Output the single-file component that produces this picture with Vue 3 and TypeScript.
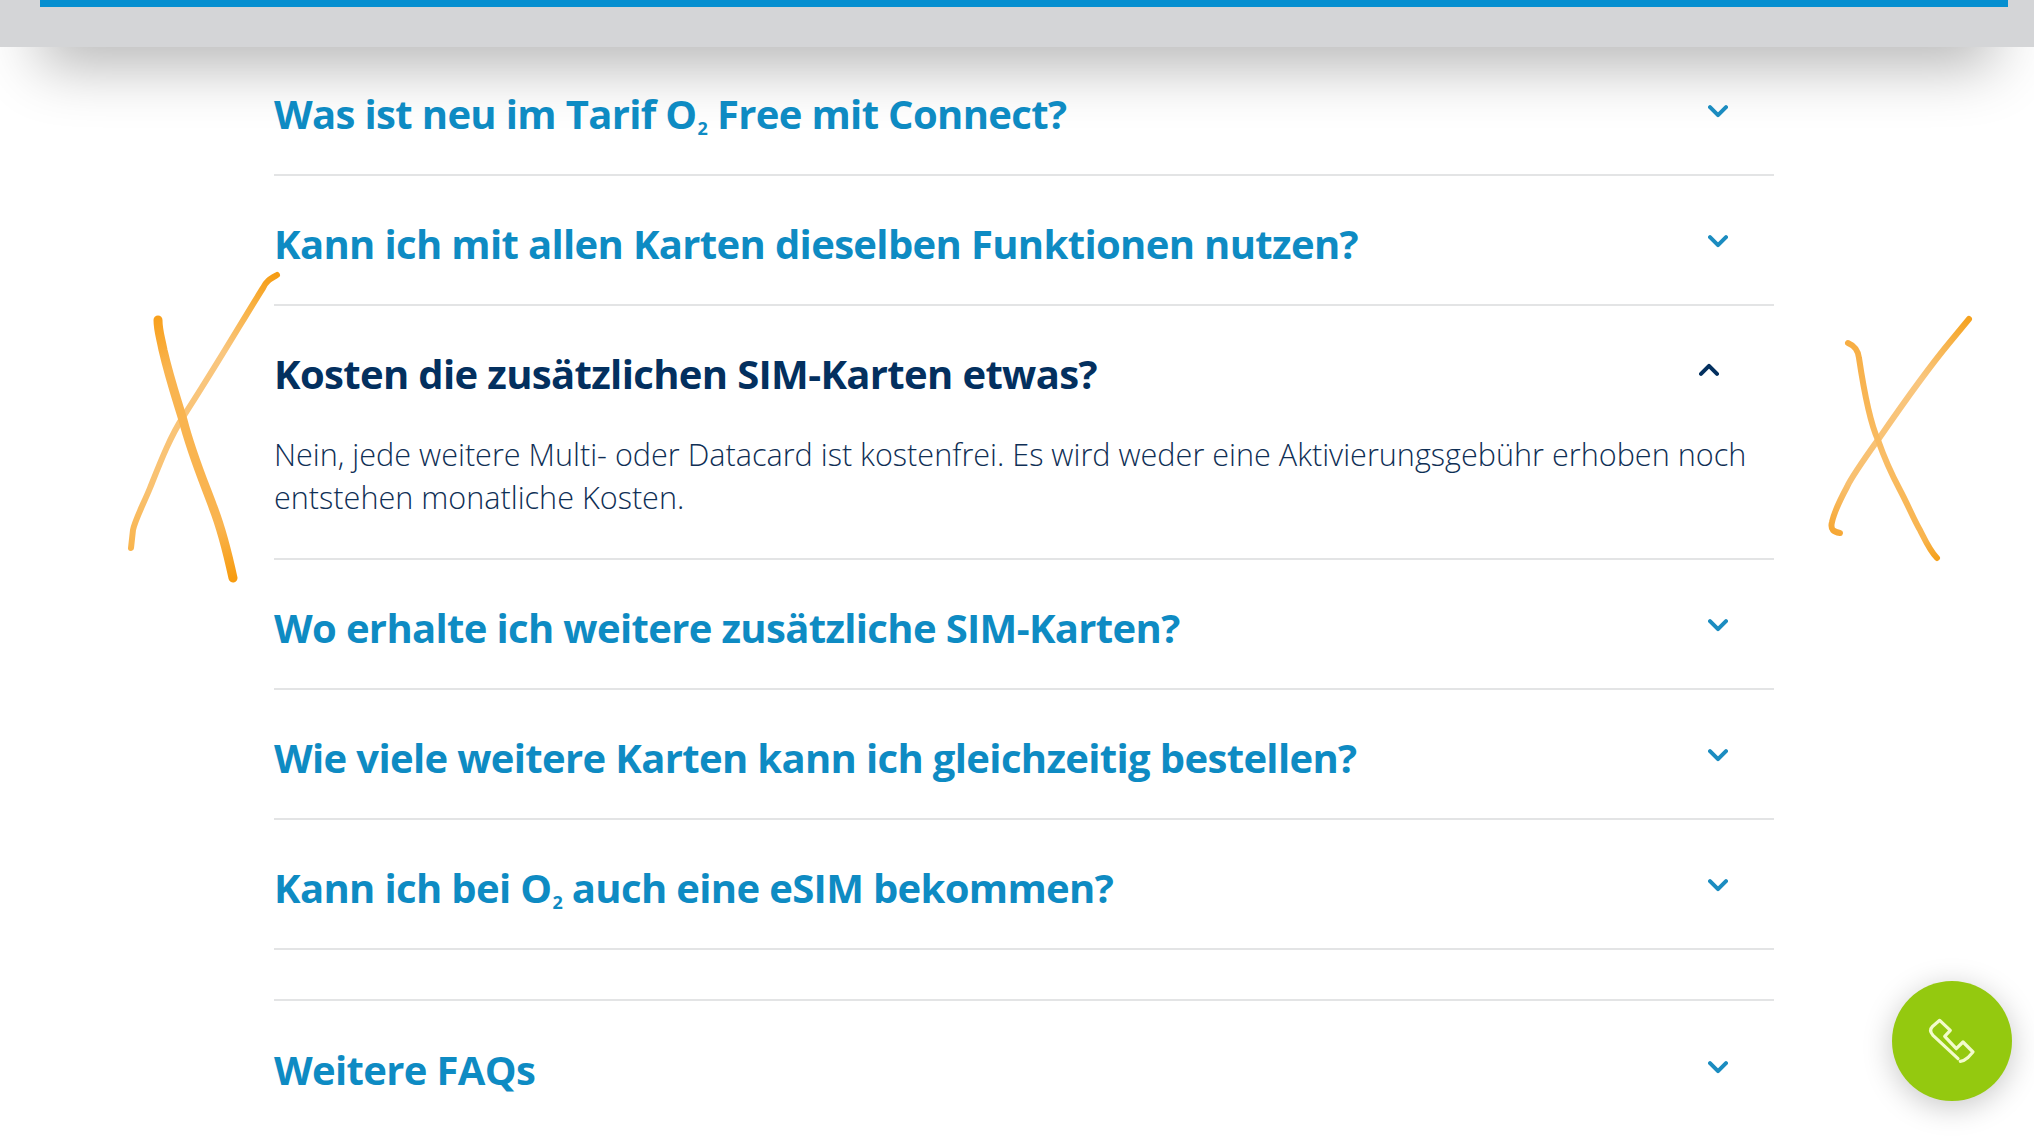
<script setup lang="ts">
interface Faq {
	before: string
	after?: string
	open?: boolean
	answer?: string
}

const faqs: Faq[] = [
	{ before: 'Was ist neu im Tarif O', after: ' Free mit Connect?' },
	{ before: 'Kann ich mit allen Karten dieselben Funktionen nutzen?' },
	{
		before: 'Kosten die zusätzlichen SIM-Karten etwas?',
		open: true,
		answer:
			'Nein, jede weitere Multi- oder Datacard ist kostenfrei. Es wird weder eine Aktivierungsgebühr erhoben noch entstehen monatliche Kosten.',
	},
	{ before: 'Wo erhalte ich weitere zusätzliche SIM-Karten?' },
	{ before: 'Wie viele weitere Karten kann ich gleichzeitig bestellen?' },
	{ before: 'Kann ich bei O', after: ' auch eine eSIM bekommen?' },
]
</script>

<template>
	<div class="page">
		<header class="topbar">
			<div class="topbarLine"></div>
		</header>

		<main class="content">
			<section class="list">
				<div v-for="faq in faqs" :key="faq.before" class="row" :class="{ rowOpen: faq.open }">
					<div class="rowHead">
						<h3 class="title">
							{{ faq.before }}<template v-if="faq.after"><span class="sub">2</span>{{ faq.after }}</template>
						</h3>
						<svg class="chev" viewBox="0 0 20 13" width="20" height="13">
							<path d="M2 2.2 L10 10.2 L18 2.2" />
						</svg>
					</div>
					<p v-if="faq.answer" class="answer">{{ faq.answer }}</p>
				</div>
			</section>

			<section class="more">
				<div class="rowHead">
					<h3 class="title">Weitere FAQs</h3>
					<svg class="chev" viewBox="0 0 20 13" width="20" height="13">
						<path d="M2 2.2 L10 10.2 L18 2.2" />
					</svg>
				</div>
			</section>
		</main>

		<!-- pen marks on top of the screenshot -->
		<svg class="marks" viewBox="0 0 2034 1141" width="2034" height="1141">
			<defs>
				<linearGradient id="penA" gradientUnits="userSpaceOnUse" x1="158" y1="317" x2="233" y2="578">
					<stop offset="0" stop-color="#f8a01c" />
					<stop offset="0.2" stop-color="#f9b450" />
					<stop offset="0.8" stop-color="#f9b450" />
					<stop offset="1" stop-color="#f79c10" />
				</linearGradient>
				<linearGradient id="penB" gradientUnits="userSpaceOnUse" x1="277" y1="275" x2="131" y2="548">
					<stop offset="0" stop-color="#f59c14" />
					<stop offset="0.12" stop-color="#f8b040" />
					<stop offset="0.3" stop-color="#f9c67e" />
					<stop offset="0.8" stop-color="#f9c272" />
					<stop offset="1" stop-color="#f9b54e" />
				</linearGradient>
				<linearGradient id="penC" gradientUnits="userSpaceOnUse" x1="1969" y1="319" x2="1832" y2="533">
					<stop offset="0" stop-color="#f5a21f" />
					<stop offset="0.14" stop-color="#f7b550" />
					<stop offset="0.3" stop-color="#f9c67e" />
					<stop offset="0.8" stop-color="#f8c070" />
					<stop offset="1" stop-color="#f6a733" />
				</linearGradient>
				<linearGradient id="penD" gradientUnits="userSpaceOnUse" x1="1848" y1="343" x2="1937" y2="558">
					<stop offset="0" stop-color="#f7ae44" />
					<stop offset="0.5" stop-color="#f9bd66" />
					<stop offset="0.9" stop-color="#f8b44e" />
					<stop offset="1" stop-color="#f5a11c" />
				</linearGradient>
			</defs>
			<path class="stroke" stroke="url(#penB)" stroke-width="6" d="M277 275 C270 279 266 281 263 288 C250 308 215 368 183 417 C170 437 160 463 150 488 C143 505 135 520 133 530 L131 548" />
			<path class="stroke" stroke="url(#penA)" stroke-width="9" d="M158 320 C158 330 160 335 163 350 C170 380 177 400 183 420 C192 455 205 485 213 507 C222 530 228 555 233 578" />
			<path class="stroke" stroke="url(#penC)" stroke-width="6" d="M1969 319 L1950 342 C1925 372 1900 408 1880 437 C1865 458 1852 476 1847 487 C1840 500 1834 513 1832 522 C1830 530 1834 532 1840 533" />
			<path class="stroke" stroke="url(#penD)" stroke-width="6" d="M1848 343 C1855 346 1858 350 1859 358 C1862 378 1868 418 1878 440 C1885 460 1892 475 1900 490 C1908 505 1915 522 1920 530 C1926 542 1930 551 1937 558" />
		</svg>

		<button class="call" type="button" aria-label="Anrufen">
			<svg viewBox="0 0 120 120" width="120" height="120">
				<path d="M66 77.7 L41 54.3 Q36.5 49.5 40.5 45.5 L47.7 39.3 L58.3 49.3 L52.7 55.3 L64.3 67.7 L71 61 L81 71 L76 76.5 Q72 80 68.3 80.3" />
			</svg>
		</button>
	</div>
</template>

<style scoped>
.page {
	position: relative;
	width: 2034px;
	height: 1141px;
	overflow: hidden;
	background: #fff;
	font-family: "Open Sans", "Noto Sans", sans-serif;
}

.topbar {
	position: relative;
	z-index: 2;
	height: 47px;
	padding: 0 26px 0 40px;
	background: #d4d5d7;
}

/* taller than the bar, so the negative spread leaves a shadow to draw */
.topbar::after {
	content: "";
	position: absolute;
	right: 0;
	bottom: 0;
	left: 0;
	height: 150px;
	box-shadow: 0 58px 60px -40px rgba(0, 0, 0, 0.3);
}

.topbarLine {
	height: 7px;
	background: #058fd0;
}

.content {
	position: relative;
	z-index: 3;
	width: 1500px;
	margin-left: 274px;
}

.row {
	border-bottom: 2px solid #e3e4e5;
}

.row:first-child .rowHead {
	height: 127px;
}

.rowHead {
	box-sizing: border-box;
	display: flex;
	align-items: center;
	justify-content: space-between;
	height: 128px;
	padding: 6px 46px 0 0;
}

.title {
	margin: 0;
	font-size: 40px;
	font-weight: 700;
	letter-spacing: -0.65px;
	color: #0e8bc3;
}

.sub {
	margin-left: 1px;
	font-size: 18px;
	vertical-align: -6px;
	line-height: 0;
}

.chev {
	display: block;
	margin-top: -4px;
}

.chev path {
	fill: none;
	stroke: #1b8cc0;
	stroke-width: 4;
	stroke-linecap: round;
	stroke-linejoin: round;
}

.rowOpen .rowHead {
	padding-right: 55px;
}

.rowOpen .title {
	color: #03305f;
}

.rowOpen .chev {
	margin-top: -8px;
	transform: rotate(180deg);
}

.rowOpen .chev path {
	stroke: #03305f;
}

.answer {
	margin: -1px 0 0;
	padding: 0 0 40px;
	font-size: 30.6px;
	font-weight: 300;
	line-height: 42.5px;
	color: #0f2f55;
}

.more {
	margin-top: 49px;
	border-top: 2px solid #e3e4e5;
}

.more .rowHead {
	height: 130px;
}

.marks {
	position: absolute;
	top: 0;
	left: 0;
	z-index: 4;
	pointer-events: none;
}

.stroke {
	fill: none;
	stroke-linecap: round;
	stroke-linejoin: round;
}

.call {
	position: absolute;
	top: 981px;
	left: 1892px;
	z-index: 5;
	width: 120px;
	height: 120px;
	padding: 0;
	border: none;
	border-radius: 50%;
	background: #94c90f;
	box-shadow: 0 6px 30px rgba(0, 0, 0, 0.22);
}

.call svg {
	display: block;
}

.call path {
	fill: none;
	stroke: #f2fbcb;
	stroke-width: 3.2;
	stroke-linecap: round;
	stroke-linejoin: round;
}
</style>

<style>
html,
body {
	margin: 0;
	background: #fff;
}
</style>
